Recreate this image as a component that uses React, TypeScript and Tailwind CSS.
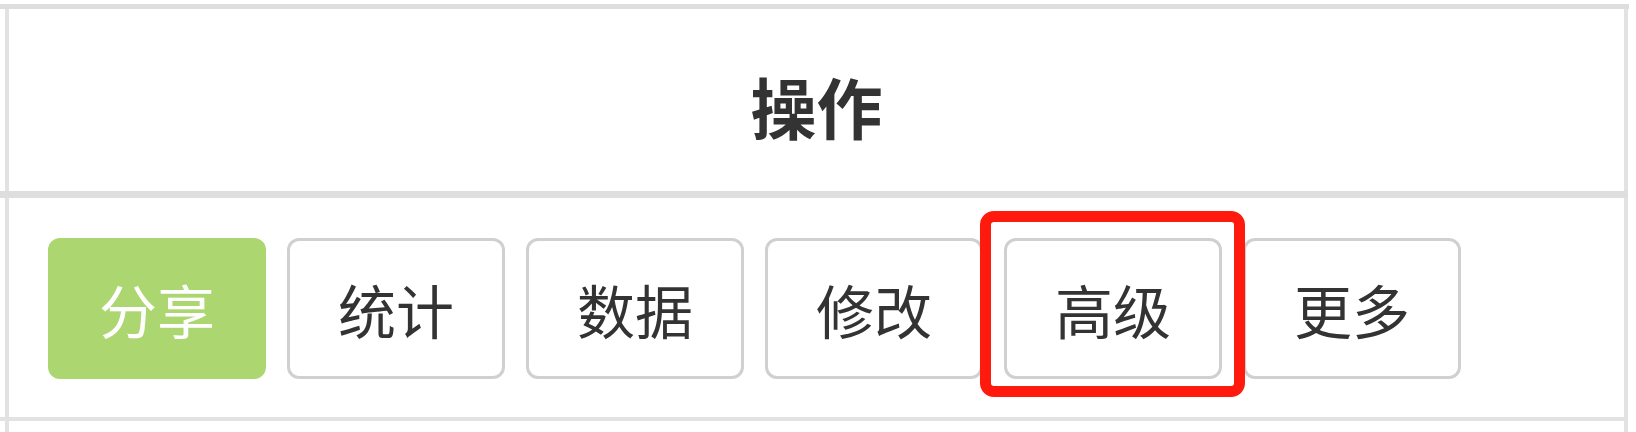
import React from 'react';

const actions = ['分享', '统计', '数据', '修改', '高级', '更多'];

const App = () => {
  return (
    <div
      className="relative w-[1636px] h-[432px] overflow-hidden bg-white text-[#333]"
      style={{ fontFamily: '"Noto Sans CJK SC", "Noto Sans", sans-serif' }}
    >
      <div className="pt-[4px]">
        {/* top rule */}
        <div className="h-[5px] w-[1629px] bg-[#dedede]" />

        {/* header row */}
        <div className="flex h-[182px]">
          <div className="w-[5px]" />
          <div className="flex w-[1623px] items-center justify-center border-x-[4px] border-[#e2e2e2] pt-[10px]">
            <h1 className="text-[66px] font-bold leading-none">操作</h1>
          </div>
        </div>

        {/* divider */}
        <div className="h-[7px] w-[1628px] bg-[#dedede]" />

        {/* action row */}
        <div className="flex h-[219px]">
          <div className="w-[5px]" />
          <div className="flex w-[1623px] items-center gap-[21px] border-x-[4px] border-[#e2e2e2] pl-[39px] pt-[2px]">
            {actions.map((label, i) => (
              <button
                key={label}
                className={
                  i === 0
                    ? 'flex h-[141px] w-[218px] items-center justify-center rounded-[12px] bg-[#acd670] text-[58px] leading-none text-white'
                    : 'flex h-[141px] w-[218px] items-center justify-center rounded-[12px] border-[3px] border-[#d0d0d0] bg-white text-[58px] leading-none text-[#333]'
                }
              >
                {label}
              </button>
            ))}
          </div>
        </div>

        {/* bottom rule */}
        <div className="h-[4px] w-[1628px] bg-[#e2e2e2]" />

        <div className="flex h-[20px]">
          <div className="w-[5px]" />
          <div className="w-[1623px] border-x-[4px] border-[#e2e2e2]" />
        </div>
      </div>

      {/* highlight marker around 高级 */}
      <div className="pointer-events-none absolute left-[980px] top-[211px] h-[186px] w-[265px] rounded-[14px] border-[11px] border-[#ff1a0d]" />
    </div>
  );
};

export default App;
